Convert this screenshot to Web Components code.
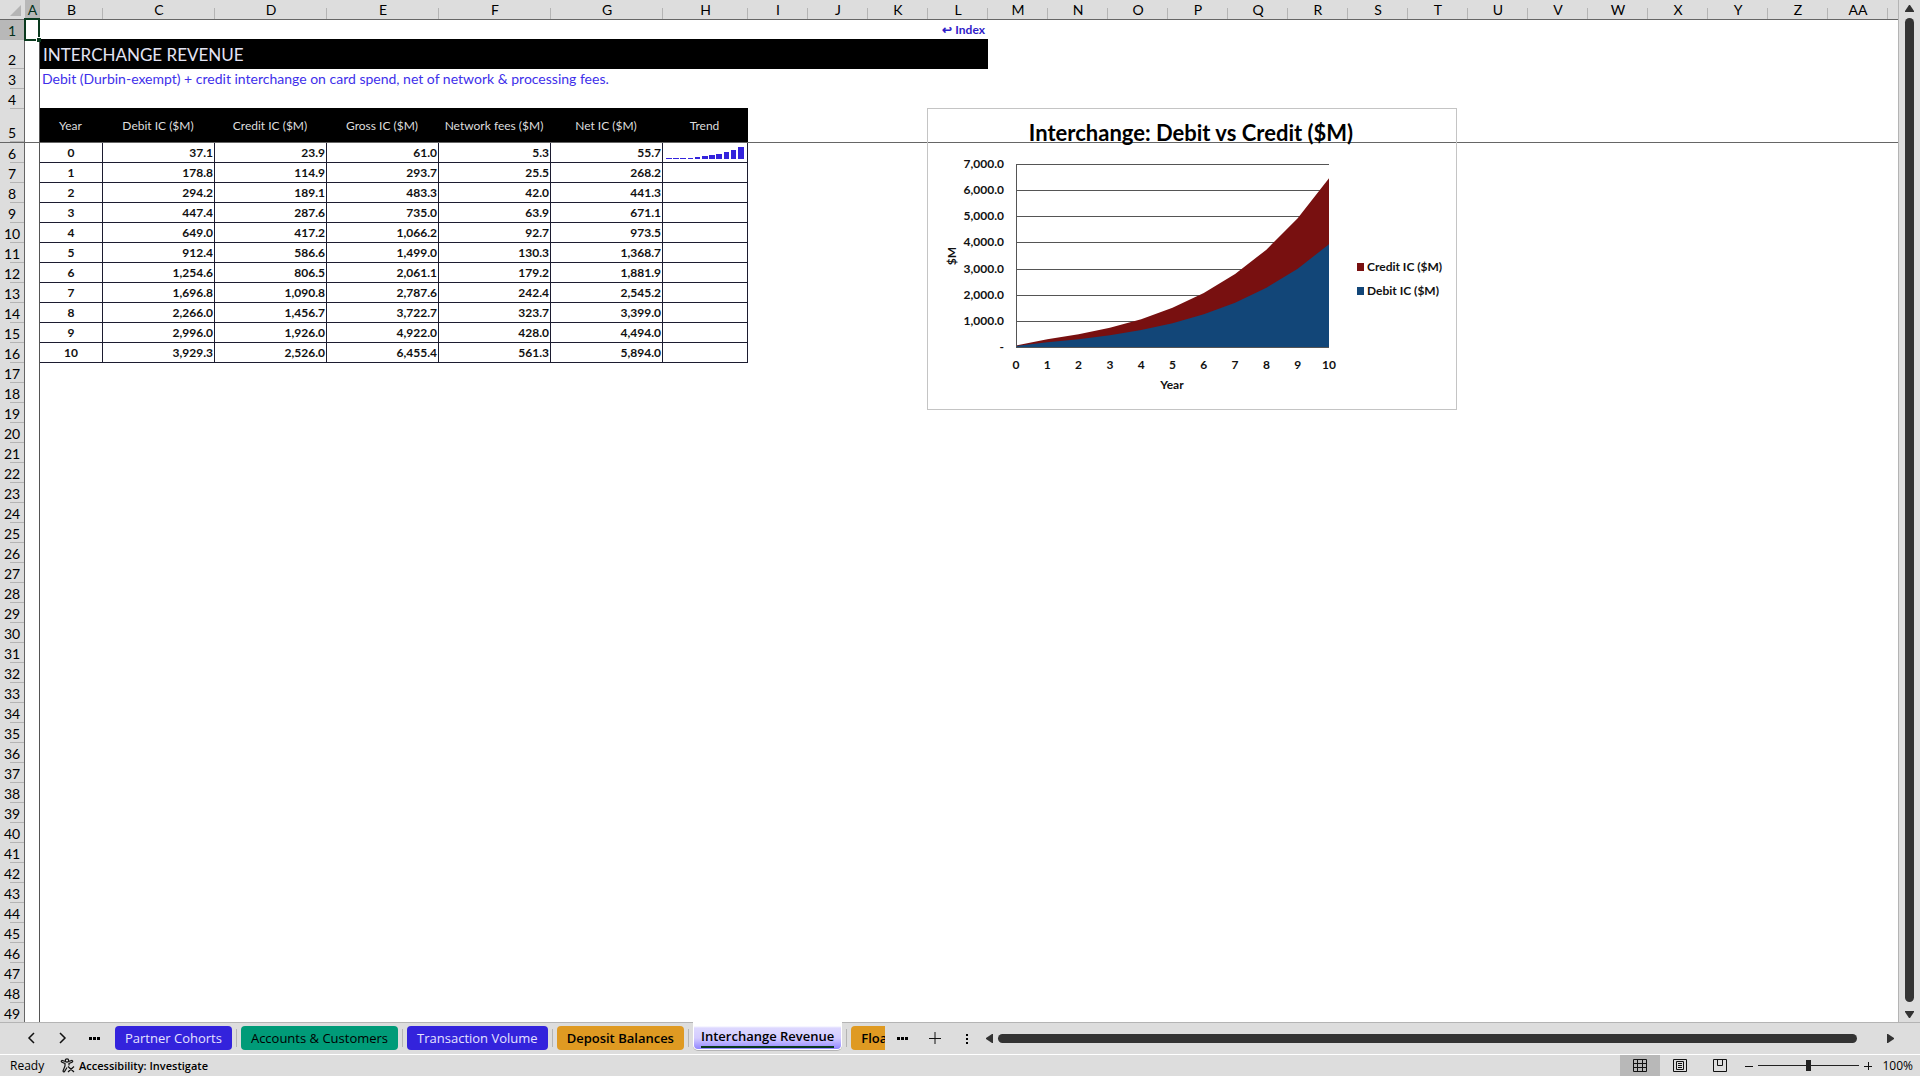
<!DOCTYPE html>
<html lang="en">
<head>
<meta charset="utf-8">
<title>Interchange Revenue</title>
<style>
  html, body {
    height: 100%;
    margin: 0;
  }
  body {
    --chrome: #ddd;
    --line: #b4b4b4;
    --ink: #333;
    --cell-font: Lato, "Liberation Sans", sans-serif;
    --ui-font: "Open Sans", "Noto Sans", sans-serif;
    background: var(--chrome);
    font-family: var(--ui-font);
    overflow: hidden;
  }
</style>
</head>
<body>
<work-book>
  <sheet-grid slot="sheet">
    <area-chart></area-chart>
  </sheet-grid>
  <scroll-bar slot="side" direction="vertical"></scroll-bar>
  <sheet-tabs slot="tabs">
    <sheet-tab tone="blue">Partner Cohorts</sheet-tab>
    <sheet-tab tone="green">Accounts &amp; Customers</sheet-tab>
    <sheet-tab tone="blue">Transaction Volume</sheet-tab>
    <sheet-tab tone="orange">Deposit Balances</sheet-tab>
    <sheet-tab tone="active">Interchange Revenue</sheet-tab>
    <sheet-tab tone="cut">Floa</sheet-tab>
  </sheet-tabs>
  <status-bar slot="status"></status-bar>
</work-book>

<script>
const YEARS = [
  ["0", "37.1", "23.9", "61.0", "5.3", "55.7"],
  ["1", "178.8", "114.9", "293.7", "25.5", "268.2"],
  ["2", "294.2", "189.1", "483.3", "42.0", "441.3"],
  ["3", "447.4", "287.6", "735.0", "63.9", "671.1"],
  ["4", "649.0", "417.2", "1,066.2", "92.7", "973.5"],
  ["5", "912.4", "586.6", "1,499.0", "130.3", "1,368.7"],
  ["6", "1,254.6", "806.5", "2,061.1", "179.2", "1,881.9"],
  ["7", "1,696.8", "1,090.8", "2,787.6", "242.4", "2,545.2"],
  ["8", "2,266.0", "1,456.7", "3,722.7", "323.7", "3,399.0"],
  ["9", "2,996.0", "1,926.0", "4,922.0", "428.0", "4,494.0"],
  ["10", "3,929.3", "2,526.0", "6,455.4", "561.3", "5,894.0"],
];
const HEADINGS = [
  "Year", "Debit IC ($M)", "Credit IC ($M)", "Gross IC ($M)",
  "Network fees ($M)", "Net IC ($M)", "Trend",
];
const COLUMNS = [..."ABCDEFGHIJKLMNOPQRSTUVWXYZ", "AA"];
const ROW_COUNT = 49;

const toNumber = (text) => Number(text.replace(",", ""));
const column = (index) => YEARS.map((row) => toNumber(row[index]));

class WorkBook extends HTMLElement {
  constructor() {
    super();
    this.attachShadow({ mode: "open" }).innerHTML = `
      <style>
        :host {
          display: flex;
          flex-direction: column;
          height: 100vh;
        }
        .view {
          display: flex;
          flex: 1;
          min-height: 0;
        }
      </style>
      <div class="view">
        <slot name="sheet"></slot>
        <slot name="side"></slot>
      </div>
      <slot name="tabs"></slot>
      <slot name="status"></slot>
    `;
  }
}

class SheetGrid extends HTMLElement {
  constructor() {
    super();
    this.attachShadow({ mode: "open" }).innerHTML = `
      <style>
        :host {
          display: block;
          position: relative;
          flex: 1;
          min-width: 0;
          overflow: hidden;
          background: #fff;
          border-right: 1px solid var(--line);
          font: 12px/16px var(--cell-font);
          color: #111;
        }
        table {
          width: 100%;
          table-layout: fixed;
          border-collapse: separate;
          border-spacing: 0;
        }
        col.rows { width: 25px; }
        col.a { width: 15px; }
        col.b { width: 63px; }
        col.wide { width: 112px; }
        col.h { width: 85px; }
        col.std { width: 60px; }
        th, td {
          box-sizing: border-box;
          height: 20px;
          padding: 0;
          white-space: nowrap;
          font-weight: normal;
        }
        thead th, .row {
          background: var(--chrome) no-repeat right bottom;
          background-image: linear-gradient(var(--line), var(--line));
          color: #000;
          font-size: 14px;
          line-height: 18px;
        }
        thead th {
          padding-top: 1px;
          background-size: 1px 11px;
          border-bottom: 1px solid #666;
        }
        .row {
          background-size: 14px 1px;
          border-right: 1px solid #666;
          vertical-align: bottom;
        }
        thead .corner, thead .rest { background-image: none; }
        .corner svg { display: block; margin-left: 9px; }
        thead .picked, .picked.row { background-color: #b8b8b8; color: #03301a; }
        .a-cell { border-right: 1px solid #555; }
        .cursor { position: relative; }
        .cursor::before {
          content: "";
          position: absolute;
          inset: -2px -1px -1px -1px;
          border: 2px solid #0a3a1e;
        }
        .cursor::after {
          content: "";
          position: absolute;
          right: -2px;
          bottom: -2px;
          width: 4px;
          height: 4px;
          background: #0a3a1e;
          border: 1px solid #fff;
          border-width: 1px 0 0 1px;
        }
        .index {
          border-bottom: 1px solid #000;
          text-align: right;
          padding-right: 3px;
        }
        a { color: #2f20c8; font-weight: bold; text-decoration: none; }
        .title {
          height: 29px;
          padding-left: 3px;
          background: #000;
          color: #e4e4f4;
          font-size: 17px;
          text-align: left;
        }
        .subtitle {
          padding-left: 2px;
          color: #4030ea;
          font-size: 14px;
        }
        .above { border-bottom: 1px solid #000; }
        .frozen th, .frozen td { height: 34px; border-bottom: 1px solid #666; }
        .heading { padding-right: 2px; background: #000; color: #ddd; }
        .figure {
          border-right: 1px solid #1c1c30;
          border-bottom: 1px solid #1c1c30;
          padding-right: 1px;
          text-align: right;
          font-weight: bold;
        }
        .year { padding: 0; text-align: center; }
        .trend { padding: 0 3px; }
        .trend svg { display: block; width: 100%; height: 12px; }
      </style>
      <table>
        <colgroup>
          <col class="rows"><col class="a"><col class="b">
          <col class="wide" span="5"><col class="h">
          <col class="std" span="19"><col>
        </colgroup>
        <thead>
          <tr>
            <th class="corner">
              <svg width="12" height="11"><path d="M12 0V11H1Z" fill="#b4b4b4"/></svg>
            </th>
            ${COLUMNS.map((name) => `<th scope="col" class="${name === "A" ? "picked" : ""}">${name}</th>`).join("")}
            <th class="rest"></th>
          </tr>
        </thead>
        <tbody></tbody>
      </table>
      <slot></slot>
    `;
    this.#renderRows();
  }

  #renderRows() {
    const rows = [];
    for (let number = 1; number <= ROW_COUNT; number++) {
      rows.push(this.#rowMarkup(number));
    }
    this.shadowRoot.querySelector("tbody").innerHTML = rows.join("");
  }

  #rowMarkup(number) {
    const head = `<th scope="row" class="row ${number === 1 ? "picked" : ""}">${number}</th>`;
    const first = `<td class="a-cell ${number === 1 ? "cursor" : ""}"></td>`;
    return `<tr class="${number === 5 ? "frozen" : ""}">${head}${first}${this.#cells(number)}</tr>`;
  }

  #cells(number) {
    if (number === 1) {
      return `<td class="index" colspan="11"><a href="#index">↩ Index</a></td><td colspan="16"></td>`;
    }
    if (number === 2) {
      return `<th class="title" colspan="11">INTERCHANGE REVENUE</th><td colspan="16"></td>`;
    }
    if (number === 3) {
      return `<td class="subtitle" colspan="27">Debit (Durbin-exempt) + credit interchange on card spend, net of network &amp; processing fees.</td>`;
    }
    if (number === 4) {
      return `<td class="above" colspan="7"></td><td colspan="20"></td>`;
    }
    if (number === 5) {
      return HEADINGS.map((text) => `<th class="heading" scope="col">${text}</th>`).join("") +
        `<td colspan="20"></td>`;
    }
    const values = YEARS[number - 6];
    if (!values) {
      return `<td colspan="27"></td>`;
    }
    return values.map((text, i) => `<td class="figure ${i === 0 ? "year" : ""}">${text}</td>`).join("") +
      `<td class="figure trend">${number === 6 ? this.#sparkline() : ""}</td><td colspan="20"></td>`;
  }

  // column sparkline of the net figures
  #sparkline() {
    const net = column(5);
    const max = Math.max(...net);
    const bars = net.map((value, i) => {
      const height = Math.max(1, Math.round((value / max) * 12));
      return `<rect x="${i * 7.2}" y="${12 - height}" width="5.6" height="${height}"/>`;
    });
    return `<svg viewBox="0 0 78 12" fill="#3323dc" shape-rendering="crispEdges">${bars.join("")}</svg>`;
  }
}

class AreaChart extends HTMLElement {
  constructor() {
    super();
    this.attachShadow({ mode: "open" });
  }

  connectedCallback() {
    const left = 89, right = 402, top = 56, bottom = 239, max = 7000;
    const x = (year) => left + ((right - left) * year) / 10;
    const y = (value) => bottom - ((bottom - top) * value) / max;
    const area = (values) =>
      `M${left} ${bottom}` + values.map((v, i) => `L${x(i)} ${y(v)}`).join("") + `V${bottom}Z`;

    let axes = "";
    for (let value = 0; value <= max; value += 1000) {
      const line = Math.round(y(value));
      const label = value ? `${value / 1000},000.0` : "-";
      axes += `<path d="M${left} ${line + 0.5}H${right}" stroke="#555"/>
        <text x="77" y="${line + 4}" text-anchor="end">${label}</text>`;
    }
    for (let year = 0; year <= 10; year++) {
      axes += `<text x="${x(year)}" y="261" text-anchor="middle">${year}</text>`;
    }

    this.shadowRoot.innerHTML = `
      <style>
        /* floats over the cells, anchored at column L, row 5 */
        :host {
          display: block;
          position: absolute;
          left: 927px;
          top: 108px;
          box-sizing: border-box;
          width: 530px;
          height: 302px;
          border: 1px solid #c4c4c4;
        }
        svg { display: block; margin: -1px; }
        text { font: bold 12px var(--cell-font); fill: #111; }
        .title { font-size: 22px; fill: #000; }
      </style>
      <svg width="530" height="302" role="img" aria-label="Interchange: Debit vs Credit">
        <text class="title" x="264" y="33" text-anchor="middle">Interchange: Debit vs Credit ($M)</text>
        ${axes}
        <path d="${area(column(3))}" fill="#781010"/>
        <path d="${area(column(1))}" fill="#124678"/>
        <path d="M${left + 0.5} ${top}V${bottom}" stroke="#555"/>
        <text x="245" y="281" text-anchor="middle">Year</text>
        <text transform="translate(29 148) rotate(-90)" text-anchor="middle">$M</text>
        <rect x="430" y="155" width="7" height="8" fill="#781010"/>
        <text x="440" y="163">Credit IC ($M)</text>
        <rect x="430" y="179" width="7" height="8" fill="#124678"/>
        <text x="440" y="187">Debit IC ($M)</text>
      </svg>
    `;
  }
}

class ScrollBar extends HTMLElement {
  constructor() {
    super();
    this.attachShadow({ mode: "open" }).innerHTML = `
      <style>
        :host {
          display: flex;
          align-items: center;
          flex: 1;
          gap: 4px;
          padding: 0 25px 0 0;
        }
        :host([direction="vertical"]) {
          flex: none;
          flex-direction: column;
          gap: 5px;
          width: 21px;
          box-sizing: border-box;
          padding: 4px 0 3px;
        }
        button {
          display: flex;
          padding: 0;
          border: 0;
          background: none;
        }
        svg { display: block; width: 9px; height: 9px; fill: var(--ink); }
        :host([direction="vertical"]) svg { transform: rotate(90deg); }
        .track { flex: 1; display: flex; align-self: stretch; align-items: center; padding-right: 25px; }
        .thumb { flex: 1; height: 9px; border-radius: 5px; background: var(--ink); }
        :host([direction="vertical"]) .track { padding: 0 0 3px; align-items: stretch; justify-content: center; }
        :host([direction="vertical"]) .thumb { flex: none; width: 9px; height: auto; }
      </style>
      <button aria-label="Back"><svg viewBox="0 0 9 9"><path d="M8 0V9H7L1 5V4L7 0Z"/></svg></button>
      <div class="track"><div class="thumb"></div></div>
      <button aria-label="Forward"><svg viewBox="0 0 9 9"><path d="M1 0V9H2L8 5V4L2 0Z"/></svg></button>
    `;
  }
}

class SheetTab extends HTMLElement {
  constructor() {
    super();
    this.attachShadow({ mode: "open" }).innerHTML = `
      <style>
        :host {
          display: flex;
          align-items: center;
          gap: 4px;
          height: 30px;
        }
        :host::after {
          content: "";
          width: 1px;
          height: 18px;
          background: var(--line);
        }
        button {
          height: 24px;
          padding: 0 10px;
          border: 0;
          border-radius: 4px;
          font: 13px/24px var(--ui-font);
          white-space: nowrap;
          color: #000;
        }
        :host([tone="blue"]) button { background: #3323dc; color: #e6e2ff; }
        :host([tone="green"]) button { background: #009b78; }
        :host([tone="orange"]) button,
        :host([tone="cut"]) button { background: #df9a22; font-weight: 600; }
        :host([tone="cut"]) button {
          width: 34px;
          padding-right: 0;
          border-radius: 4px 0 0 4px;
          overflow: hidden;
        }
        :host([tone="cut"])::after { display: none; }
        :host([tone="active"]) { align-items: flex-start; }
        :host([tone="active"])::after { margin-top: 6px; }
        :host([tone="active"]) button {
          height: 28px;
          margin-top: -1px;
          padding: 0 7px;
          border: 1px solid #fff;
          border-top: 0;
          border-radius: 0 0 5px 5px;
          box-shadow: 0 1px 0 var(--line);
          background: linear-gradient(#fff 4px, #ddd8ff 6px, #d4ccff 16px, #9186ff);
          font-weight: 600;
        }
        :host([tone="active"]) span {
          display: block;
          height: 22px;
          border-bottom: 2px solid #0a3a1e;
          line-height: 24px;
        }
      </style>
      <button><span><slot></slot></span></button>
    `;
  }
}

class SheetTabs extends HTMLElement {
  constructor() {
    super();
    this.attachShadow({ mode: "open" }).innerHTML = `
      <style>
        :host {
          display: flex;
          flex: none;
          align-items: center;
          height: 30px;
          padding-bottom: 1px;
          border-top: 1px solid var(--line);
          border-bottom: 1px solid #fff;
        }
        .nav { display: flex; width: 115px; padding-left: 15px; box-sizing: border-box; }
        .tabs { display: flex; gap: 4px; }
        button {
          display: flex;
          justify-content: center;
          width: 32px;
          padding: 0;
          border: 0;
          background: none;
        }
        .tools { display: flex; padding-left: 2px; width: 98px; }
        svg { display: block; fill: none; stroke: #111; }
        .dots { fill: #000; stroke: none; }
      </style>
      <div class="nav">
        <button aria-label="Previous sheet"><svg width="8" height="12"><path d="M7 1L2 6L7 11" stroke-width="1.5"/></svg></button>
        <button aria-label="Next sheet"><svg width="8" height="12"><path d="M1 1L6 6L1 11" stroke-width="1.5"/></svg></button>
        <button aria-label="More sheets"><svg class="dots" width="12" height="12"><path d="M0 5h3v3H0zM4 5h3v3H4zM8 5h3v3H8z"/></svg></button>
      </div>
      <div class="tabs"><slot></slot></div>
      <div class="tools">
        <button aria-label="More sheets"><svg class="dots" width="12" height="12"><path d="M0 5h3v3H0zM4 5h3v3H4zM8 5h3v3H8z"/></svg></button>
        <button aria-label="New sheet"><svg width="12" height="12"><path d="M6 0V12M0 6.5H12"/></svg></button>
        <button aria-label="Resize"><svg class="dots" width="3" height="12"><path d="M0 2h2v2H0zM0 6h2v2H0zM0 10h2v2H0z"/></svg></button>
      </div>
      <scroll-bar></scroll-bar>
    `;
  }
}

class StatusBar extends HTMLElement {
  constructor() {
    super();
    this.attachShadow({ mode: "open" }).innerHTML = `
      <style>
        :host {
          display: flex;
          flex: none;
          align-items: center;
          height: 21px;
          font: 12px/21px var(--ui-font);
          color: #000;
        }
        button {
          display: flex;
          align-items: center;
          justify-content: center;
          height: 21px;
          padding: 0;
          border: 0;
          background: none;
          font: inherit;
          color: inherit;
        }
        .ready { width: 50px; padding-left: 10px; }
        .access { gap: 4px; font-size: 11px; font-weight: 600; }
        .views { display: flex; margin-left: auto; }
        .views button { width: 40px; }
        .views .on { background: #b8b8b8; }
        .zoom { display: flex; align-items: center; gap: 4px; padding: 0 7px 0 4px; }
        .zoom button { width: 10px; }
        .level { width: 36px; text-align: right; }
        svg { display: block; fill: none; stroke: #111; }
        input {
          appearance: none;
          width: 101px;
          height: 12px;
          margin: 0;
          background: linear-gradient(#222, #222) no-repeat center / 100% 1px;
        }
        input::-webkit-slider-thumb {
          appearance: none;
          width: 5px;
          height: 11px;
          background: #222;
        }
      </style>
      <span class="ready">Ready</span>
      <button class="access">
        <svg width="15" height="15" stroke-width="1.2">
          <circle cx="7" cy="2.5" r="1.7"/>
          <path d="M5.5 3.5L2 2.5Q.5 3 2 4.2L5 5.5V8L3 13Q3.5 14.5 4.5 13.5L7 9.5M8.5 3.5L12 2.5Q13.5 3 12 4.2L9 5.5V7.5M8 8.5L14 14M14 8.5L8 14"/>
        </svg>
        Accessibility: Investigate
      </button>
      <div class="views">
        <button class="on" aria-label="Normal"><svg width="14" height="13"><path d="M.5.5H13.5V12.5H.5ZM.5 4.5H13.5M.5 8.5H13.5M4.5 .5V12.5M9.5 .5V12.5"/></svg></button>
        <button aria-label="Page layout"><svg width="14" height="13"><path d="M.5.5H13.5V12.5H.5ZM3.5 2.5H10.5V10.5H3.5ZM5 4.5H9M5 6.5H9M5 8.5H9"/></svg></button>
        <button aria-label="Page break preview"><svg width="14" height="13"><path d="M.5.5H13.5V12.5H.5ZM4.5 .5V6.5H9.5V.5"/></svg></button>
      </div>
      <div class="zoom">
        <button aria-label="Zoom out"><svg width="8" height="8"><path d="M0 4.5H8"/></svg></button>
        <input type="range" min="0" max="100" value="50" aria-label="Zoom">
        <button aria-label="Zoom in"><svg width="8" height="8"><path d="M0 4.5H8M4.5 0V8"/></svg></button>
        <span class="level">100%</span>
      </div>
    `;
  }
}

customElements.define("work-book", WorkBook);
customElements.define("sheet-grid", SheetGrid);
customElements.define("area-chart", AreaChart);
customElements.define("scroll-bar", ScrollBar);
customElements.define("sheet-tab", SheetTab);
customElements.define("sheet-tabs", SheetTabs);
customElements.define("status-bar", StatusBar);
</script>
</body>
</html>
